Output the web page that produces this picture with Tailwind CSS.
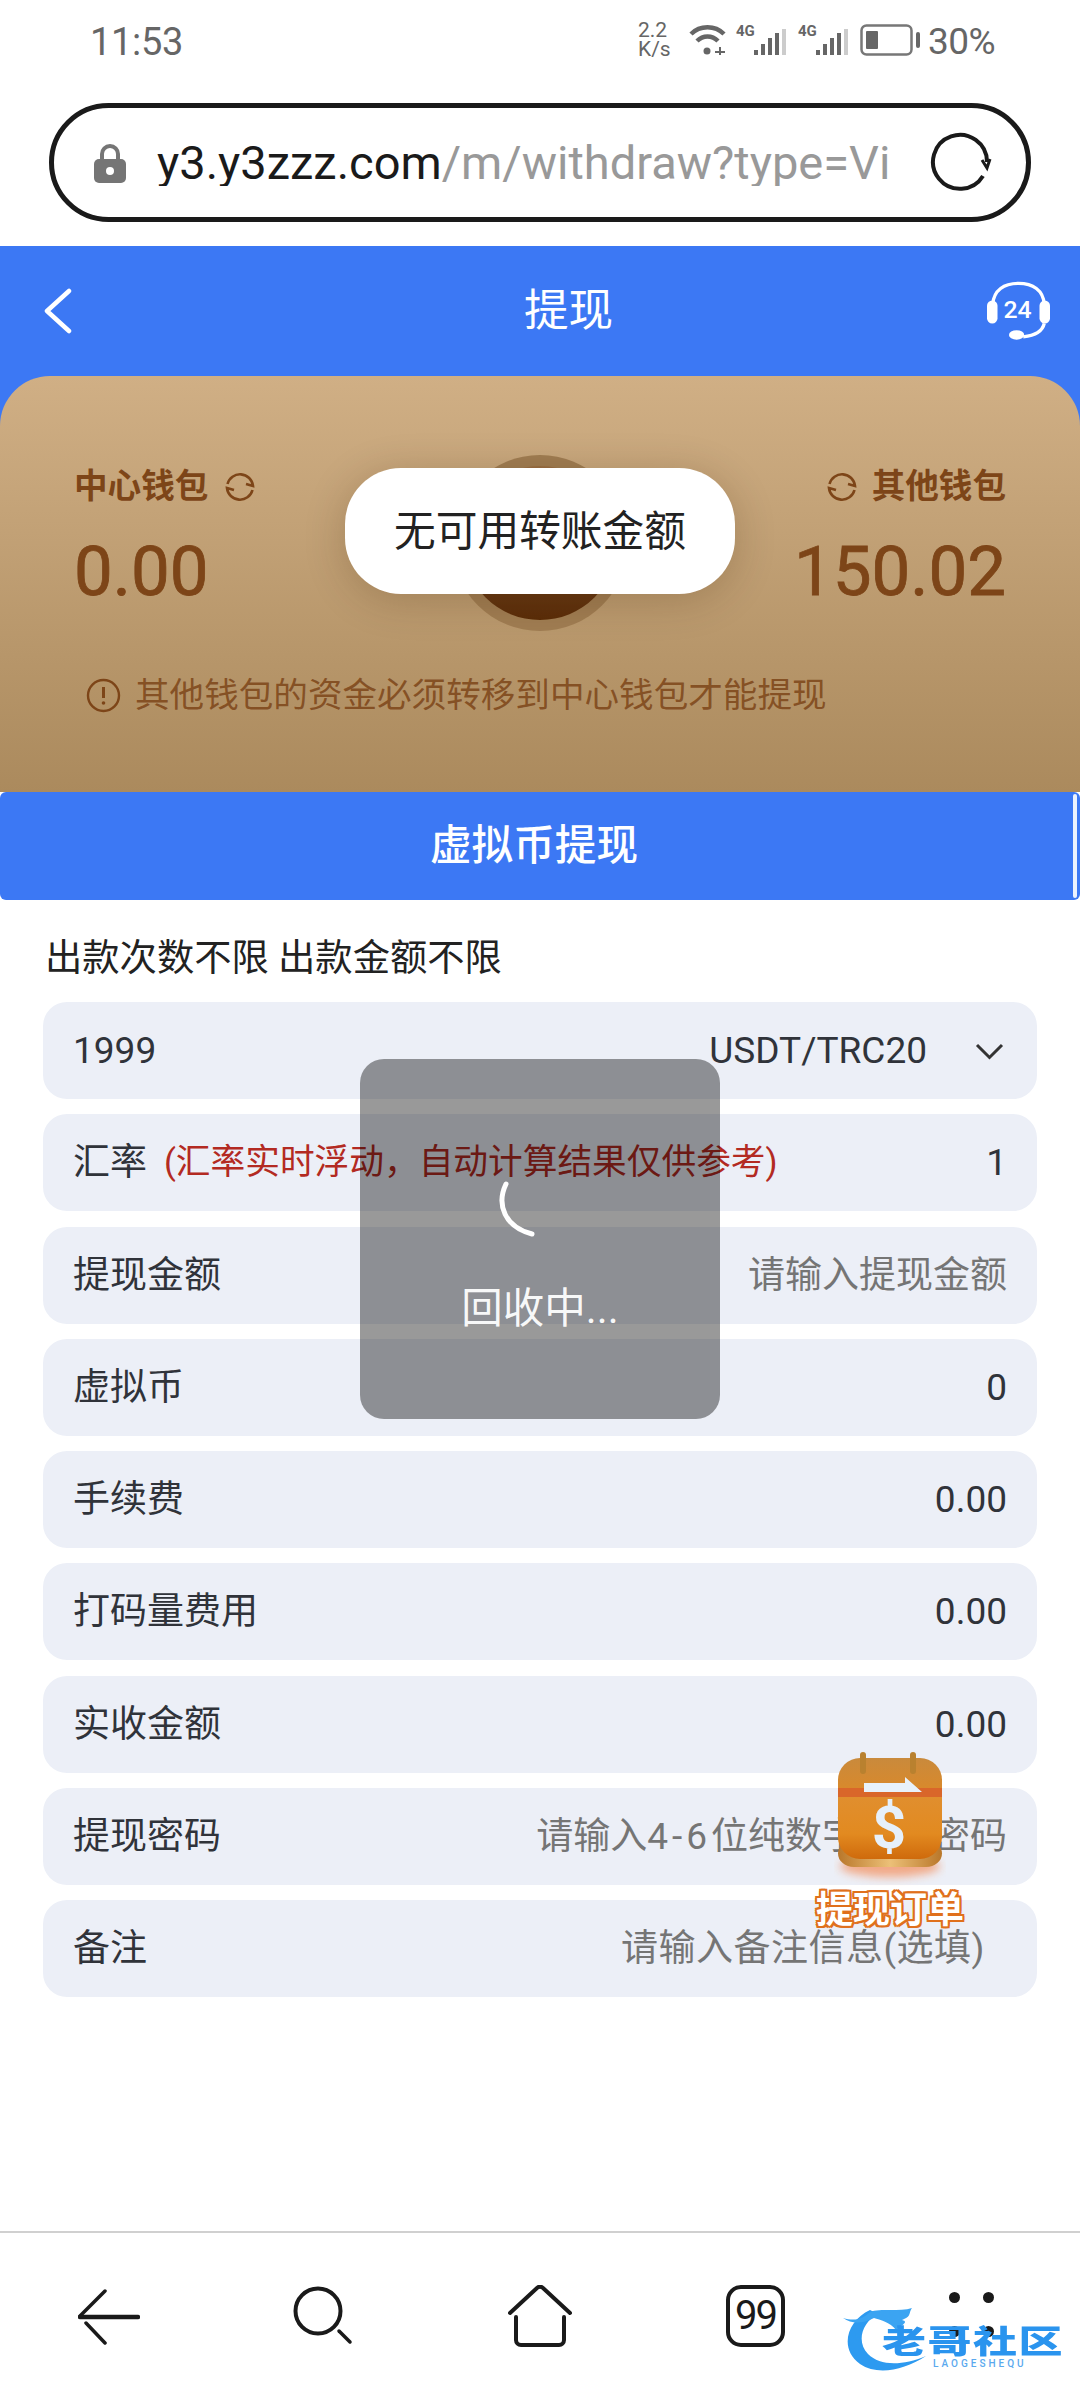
<!DOCTYPE html>
<html lang="zh-CN">
<head>
<meta charset="utf-8">
<script src="https://cdn.jsdelivr.net/npm/@tailwindcss/browser@4"></script>
<title>提现</title>
</head>
<body class="bg-white">
<div class="relative w-[1080px] h-[2400px] overflow-hidden bg-white text-[#30333a] font-[Roboto,'Noto_Sans_CJK_SC',sans-serif]">

  <!-- status bar -->
  <div class="h-[80px] flex items-center pl-[90px] text-[#666]">
    <span class="text-[38px] w-[548px] leading-none mt-[3px] tracking-[-0.3px]">11:53</span>
    <div class="flex flex-col w-[51px] text-[21px] leading-[19px] -mt-[1px]"><span>2.2</span><span>K/s</span></div>
    <svg class="w-[38px] h-[32px]" viewBox="0 0 38 32" fill="none" stroke="#666"><path d="M2 10C11 1 26 1 35 10" stroke-width="4.5"/><path d="M8 17C14 11 23 11 29 17" stroke-width="4.5"/><circle cx="18" cy="27" r="3.5" fill="#666" stroke="none"/><path d="M26 28h10M31 23v8" stroke-width="2"/></svg>
    <div class="flex items-end ml-[9px] w-[62px] h-[32px]">
      <span class="text-[15px] font-bold leading-none self-start w-[18px]">4G</span>
      <svg class="w-[32px] h-[28px]" viewBox="0 0 32 28"><rect x="0" y="22" width="4" height="5" fill="#666"/><rect x="7" y="16" width="4" height="11" fill="#666"/><rect x="14" y="10" width="4" height="17" fill="#666"/><rect x="21" y="5" width="4" height="22" fill="#666"/><rect x="28" y="1" width="4" height="26" fill="#ccc"/></svg>
    </div>
    <div class="flex items-end w-[62px] h-[32px]">
      <span class="text-[15px] font-bold leading-none self-start w-[18px]">4G</span>
      <svg class="w-[32px] h-[28px]" viewBox="0 0 32 28"><rect x="0" y="22" width="4" height="5" fill="#666"/><rect x="7" y="16" width="4" height="11" fill="#666"/><rect x="14" y="10" width="4" height="17" fill="#666"/><rect x="21" y="5" width="4" height="22" fill="#666"/><rect x="28" y="1" width="4" height="26" fill="#ccc"/></svg>
    </div>
    <svg class="w-[62px] h-[32px]" viewBox="0 0 62 32" fill="none"><rect x="1.5" y="1.5" width="50" height="29" rx="5" stroke="#777" stroke-width="2.5"/><rect x="6" y="7" width="12" height="18" rx="1" fill="#666"/><rect x="56" y="8" width="4" height="16" rx="2" fill="#666"/></svg>
    <span class="text-[37px] leading-none ml-[6px] mt-[3px] tracking-[-0.5px]">30%</span>
  </div>

  <!-- url bar -->
  <div class="mt-[23px] mx-[49px] h-[119px] rounded-[60px] border-[5px] border-[#1a1a1a] flex items-center pl-[40px]">
    <svg class="w-[32px] h-[40px] shrink-0" viewBox="0 0 32 40"><path d="M8 18V11a8 8 0 0 1 16 0v7" fill="none" stroke="#757575" stroke-width="4"/><rect x="0" y="16" width="32" height="24" rx="5" fill="#757575"/><circle cx="16" cy="28" r="4" fill="#fff"/></svg>
    <div class="ml-[31px] w-[731px] overflow-hidden whitespace-nowrap text-[47px] leading-none text-[#999]"><span class="text-[#1a1a1a]">y3.y3zzz.com</span>/m/withdraw?type=Virtual</div>
    <svg class="ml-[42px] w-[62px] h-[62px] shrink-0" viewBox="0 0 62 62" fill="none" stroke="#1a1a1a" stroke-width="4"><path d="M53 44A27 27 0 1 1 57 30"/><path d="M52 28l5 8 3-9" stroke-width="3"/></svg>
  </div>

  <!-- header -->
  <div class="mt-[24px] h-[130px] bg-[#3c78f4] flex items-center relative">
    <svg class="ml-[44px] w-[28px] h-[46px]" viewBox="0 0 28 46" fill="none" stroke="#fff" stroke-width="4.5" stroke-linecap="round" stroke-linejoin="round"><path d="M25 3L3 23l22 20"/></svg>
    <div class="ml-[452px] text-[44.6px] leading-none text-white">提现</div>
    <svg class="ml-[374px] w-[63px] h-[62px] mt-[2px]" viewBox="0 0 66 64" fill="none"><path d="M6 24C7 9 18 2 33 2s26 7 27 22" stroke="#fff" stroke-width="3.5"/><rect x="0" y="20" width="11" height="24" rx="5.5" fill="#fff"/><rect x="55" y="20" width="11" height="24" rx="5.5" fill="#fff"/><path d="M60 44c-2 9-12 13-22 14" stroke="#fff" stroke-width="3.5"/><ellipse cx="31" cy="56" rx="8" ry="5" fill="#fff"/><text x="32" y="38" text-anchor="middle" font-family="Roboto" font-size="26" font-weight="500" fill="#fff">24</text></svg>
  </div>

  <!-- wallet card -->
  <div class="bg-[#3c78f4]">
    <div class="relative h-[416px] rounded-t-[50px] bg-linear-to-b from-[#d0af85] to-[#ab8a5d] px-[74px] pt-[88px]">
      <div class="flex justify-between text-[#7d4518]">
        <div>
          <div class="flex items-center h-[46px] text-[33.6px] font-bold leading-none">中心钱包
            <svg class="ml-[16px] w-[32px] h-[32px]" viewBox="0 0 32 32" fill="none" stroke="#7d4518" stroke-width="2.6"><path d="M3.5 13A13 13 0 0 1 29 15L22 13"/><path d="M28.5 19A13 13 0 0 1 3 17L10 19"/></svg>
          </div>
          <div class="mt-[25px] text-[69px] leading-[74px] [-webkit-text-stroke:0.8px_#7d4518]">0.00</div>
        </div>
        <div class="flex flex-col items-end">
          <div class="flex items-center h-[46px] text-[33.6px] font-bold leading-none">
            <svg class="mr-[14px] w-[32px] h-[32px]" viewBox="0 0 32 32" fill="none" stroke="#7d4518" stroke-width="2.6"><path d="M3.5 13A13 13 0 0 1 29 15L22 13"/><path d="M28.5 19A13 13 0 0 1 3 17L10 19"/></svg>其他钱包
          </div>
          <div class="mt-[25px] text-[69px] leading-[74px] [-webkit-text-stroke:0.8px_#7d4518]">150.02</div>
        </div>
      </div>
      <div class="mt-[69px] ml-[12px] flex items-center text-[34.6px] leading-none text-[#7d4518]/85">
        <svg class="mr-[14px] w-[35px] h-[35px]" viewBox="0 0 35 35" fill="none" stroke="#7d4518" stroke-width="2.4"><circle cx="17.5" cy="17.5" r="15.5"/><path d="M17.5 9v11" stroke-width="3"/><circle cx="17.5" cy="25" r="1.8" fill="#7d4518" stroke="none"/></svg>其他钱包的资金必须转移到中心钱包才能提现
      </div>
      <!-- centre coin -->
      <div class="absolute left-[452px] top-[79px] w-[176px] h-[176px] rounded-full bg-[#a07d52] flex items-center justify-center">
        <div class="w-[154px] h-[154px] rounded-full bg-linear-to-b from-[#9b6f43] to-[#5a2c07]"></div>
      </div>
    </div>
  </div>

  <!-- tab -->
  <div class="relative h-[108px] rounded-[6px] bg-[#3c78f4] flex items-center justify-center pr-[12px] text-[41.6px] font-medium text-white leading-none">虚拟币提现
    <div class="absolute right-[3px] top-[2px] bottom-[2px] w-[4px] rounded-full bg-white/90"></div>
  </div>

  <!-- form -->
  <div class="px-[43px]">
    <div class="mt-[38px] pl-[2px] h-[40px] text-[37.3px] leading-[40px] text-[#222]">出款次数不限 出款金额不限</div>
    <div class="mt-[24px] flex flex-col gap-[15.3px] text-[37px] leading-none">
      <div class="h-[97px] rounded-[24px] bg-[#eceff7] flex items-center px-[30px]">
        <span>1999</span>
        <span class="ml-auto">USDT/TRC20</span>
        <svg class="ml-[48px] mr-[3px] w-[29px] h-[18px]" viewBox="0 0 29 18" fill="none" stroke="#333" stroke-width="3"><path d="M2 3l12.5 12.5L27 3"/></svg>
      </div>
      <div class="h-[97px] rounded-[24px] bg-[#eceff7] flex items-center px-[30px]">
        <span>汇率</span>
        <span class="ml-[17px] text-[34.7px] text-[#b32a22]">(汇率实时浮动，自动计算结果仅供参考)</span>
        <span class="ml-auto">1</span>
      </div>
      <div class="h-[97px] rounded-[24px] bg-[#eceff7] flex items-center justify-between px-[30px]">
        <span>提现金额</span><span class="text-[#757575]">请输入提现金额</span>
      </div>
      <div class="h-[97px] rounded-[24px] bg-[#eceff7] flex items-center justify-between px-[30px]">
        <span>虚拟币</span><span>0</span>
      </div>
      <div class="h-[97px] rounded-[24px] bg-[#eceff7] flex items-center justify-between px-[30px]">
        <span>手续费</span><span>0.00</span>
      </div>
      <div class="h-[97px] rounded-[24px] bg-[#eceff7] flex items-center justify-between px-[30px]">
        <span>打码量费用</span><span>0.00</span>
      </div>
      <div class="h-[97px] rounded-[24px] bg-[#eceff7] flex items-center justify-between px-[30px]">
        <span>实收金额</span><span>0.00</span>
      </div>
      <div class="h-[97px] rounded-[24px] bg-[#eceff7] flex items-center justify-between px-[30px]">
        <span>提现密码</span><span class="text-[#757575]">请输入<span class="tracking-[4px]">4-6</span>位纯数字提现密码</span>
      </div>
      <div class="h-[97px] rounded-[24px] bg-[#eceff7] flex items-center justify-between pl-[30px] pr-[52px]">
        <span>备注</span><span class="text-[#757575] tracking-[0.5px]">请输入备注信息(选填)</span>
      </div>
    </div>
  </div>

  <!-- bottom browser nav -->
  <div class="absolute left-0 right-0 top-[2231px] h-[169px] border-t-[2px] border-[#d0d0d0] bg-white">
    <svg class="absolute left-[78px] top-[56px] w-[62px] h-[56px]" viewBox="0 0 62 56" fill="none" stroke="#1a1a1a" stroke-width="3.5" stroke-linecap="round"><path d="M2 27L27 2"/><path d="M2 28h58" stroke-width="4.5"/><path d="M8 34l19 20"/></svg>
    <svg class="absolute left-[293px] top-[53px] w-[60px] h-[60px]" viewBox="0 0 60 60" fill="none" stroke="#1a1a1a" stroke-width="4" stroke-linecap="round"><circle cx="25" cy="25" r="22.5"/><path d="M46 45l11 11" stroke-width="3.5"/></svg>
    <svg class="absolute left-[508px] top-[52px] w-[64px] h-[62px]" viewBox="0 0 64 62" fill="none" stroke="#1a1a1a" stroke-width="4" stroke-linecap="round" stroke-linejoin="round"><path d="M2 28L29 3a4 4 0 0 1 6 0L62 28"/><path d="M8 32v23a5 5 0 0 0 5 5h38a5 5 0 0 0 5-5V32"/></svg>
    <div class="absolute left-[726px] top-[52px] w-[59px] h-[62px] rounded-[15px] border-[4px] border-[#1a1a1a] flex items-center justify-center text-[40px] leading-none text-[#1a1a1a] tracking-[-2px]">99</div>
    <div class="absolute left-[949px] top-[59px] grid grid-cols-2 gap-x-[23px] gap-y-[23px]">
      <span class="w-[11px] h-[11px] rounded-full bg-[#1a1a1a]"></span><span class="w-[11px] h-[11px] rounded-full bg-[#1a1a1a]"></span>
      <span class="w-[11px] h-[11px] rounded-full bg-[#1a1a1a]"></span><span class="w-[11px] h-[11px] rounded-full bg-[#1a1a1a]"></span>
    </div>
  </div>

  <!-- watermark -->
  <div class="absolute left-[840px] top-[2300px] w-[230px] h-[80px]">
    <svg class="absolute left-0 top-0 w-[90px] h-[80px] blur-[0.6px]" viewBox="0 0 90 80"><path d="M30 10C8 20-2 48 20 64C38 76 64 70 86 56C62 66 40 66 28 54C16 42 22 22 38 14Z" fill="#2d9af0"/><path d="M3 18C16 22 24 18 30 12C40 8 60 12 72 8C68 14 72 16 62 20C70 22 60 26 56 30C50 22 40 20 34 18C22 24 12 24 3 18Z" fill="#3ba4f2"/></svg>
    <div class="absolute left-[42px] top-[20px] text-[44px] leading-[44px] font-black text-[#2a94ee] tracking-[1.5px] whitespace-nowrap scale-y-[0.72] blur-[0.4px]">老哥社区</div>
    <div class="absolute left-[93px] top-[59px] text-[10px] leading-none font-medium text-[#5aa9ee] tracking-[3px] whitespace-nowrap">LAOGESHEQU</div>
  </div>

  <!-- floating order button -->
  <div class="absolute left-[815px] top-[1750px] w-[150px] flex flex-col items-center">
    <svg class="w-[112px] h-[136px]" viewBox="0 0 112 136">
      <defs>
        <linearGradient id="cal" x1="0" y1="0" x2="0" y2="1"><stop offset="0" stop-color="#c98a3c"/><stop offset=".3" stop-color="#d8892c"/><stop offset=".34" stop-color="#e08f30"/><stop offset=".75" stop-color="#e28a20"/><stop offset="1" stop-color="#cf6a0c"/></linearGradient>
        <linearGradient id="plate" x1="0" y1="0" x2="1" y2="0"><stop offset="0" stop-color="#b9772a"/><stop offset=".5" stop-color="#ecc078"/><stop offset="1" stop-color="#b9772a"/></linearGradient>
        <filter id="glow" x="-30%" y="-100%" width="160%" height="300%"><feGaussianBlur stdDeviation="5"/></filter>
      </defs>
      <ellipse cx="56" cy="116" rx="50" ry="11" fill="#f6702a" opacity=".55" filter="url(#glow)"/>
      <rect x="4" y="90" width="104" height="27" rx="16" fill="url(#plate)"/>
      <rect x="4" y="8" width="104" height="101" rx="22" fill="url(#cal)"/>
      <rect x="4" y="38" width="104" height="9" fill="#d9662a"/>
      <rect x="26" y="2" width="6" height="22" rx="3" fill="#b9812f"/>
      <rect x="76" y="2" width="6" height="22" rx="3" fill="#b9812f"/>
      <path d="M30 33H71V27L88 42H30Z" fill="#e8f1fa"/>
      <text x="55" y="98" text-anchor="middle" font-family="Roboto" font-size="60" font-weight="700" fill="#e6f0fa">$</text>
    </svg>
    <div class="mt-[5px] text-[37px] leading-[40px] font-bold text-white whitespace-nowrap [text-shadow:2px_0_0_#e0701c,-2px_0_0_#e0701c,0_2px_0_#e0701c,0_-2px_0_#e0701c,2px_2px_0_#e0701c,-2px_-2px_0_#e0701c,2px_-2px_0_#e0701c,-2px_2px_0_#e0701c]">提现订单</div>
  </div>

  <!-- toast -->
  <div class="absolute left-[345px] top-[468px] w-[390px] h-[126px] rounded-[56px] bg-white shadow-[0_6px_40px_rgba(60,30,0,0.22)] flex items-center justify-center pt-[2px] text-[41.7px] leading-none text-[#222]">无可用转账金额</div>

  <!-- loading overlay -->
  <div class="absolute left-[360px] top-[1059px] w-[360px] h-[360px] rounded-[24px] bg-black/40 flex flex-col items-center">
    <svg class="mt-[122px] ml-[-48px] w-[38px] h-[56px]" viewBox="0 0 38 56" fill="none" stroke="#fff" stroke-width="5" stroke-linecap="round"><path d="M9 3C-1 24 8 46 35 53"/></svg>
    <div class="mt-[50px] text-[41.5px] leading-[44px] text-white/95">回收中...</div>
  </div>
</div>
</body>
</html>
